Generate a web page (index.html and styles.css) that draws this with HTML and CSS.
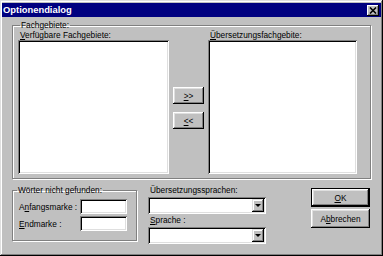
FILE: index.html
```html
<!DOCTYPE html>
<html lang="de">
<head>
  <meta charset="UTF-8">
  <title>Optionendialog</title>
  <link rel="stylesheet" href="styles.css">
</head>
<body>

  <div class="window">
    <div class="titlebar">
      <span class="title">Optionendialog</span>
      <span class="close">
        <svg width="8" height="7" viewBox="0 0 8 7"><path d="M1 0.5L7 6.5M7 0.5L1 6.5" stroke="#000" stroke-width="1.6"/></svg>
      </span>
    </div>

    <div class="content">
      <!-- Fachgebiete -->
      <fieldset class="group topics">
        <legend>Fachgebiete:</legend>
        <div class="topic-col">
          <div class="label"><u>V</u>erfügbare Fachgebiete:</div>
          <div class="listbox left"></div>
        </div>
        <div class="move-col">
          <button class="btn move"><u>&gt;</u>&gt;</button>
          <button class="btn move"><u>&lt;</u>&lt;</button>
        </div>
        <div class="topic-col">
          <div class="label"><u>Ü</u>bersetzungsfachgebite:</div>
          <div class="listbox right"></div>
        </div>
      </fieldset>

      <div class="bottom">
        <!-- Woerter nicht gefunden -->
        <fieldset class="group missing">
          <legend>Wörter nicht gefunden:</legend>
          <div class="field-row">
            <span class="field-label">A<u>n</u>fangsmarke :</span>
            <div class="input"></div>
          </div>
          <div class="field-row">
            <span class="field-label"><u>E</u>ndmarke :</span>
            <div class="input"></div>
          </div>
        </fieldset>

        <div class="lang-col">
          <div class="label">Übersetzungssprachen:</div>
          <div class="combo"><span class="drop"><span class="arrow"></span></span></div>
          <div class="label second"><u>S</u>prache :</div>
          <div class="combo"><span class="drop"><span class="arrow"></span></span></div>
        </div>

        <div class="actions">
          <button class="btn default"><span><u>O</u>K</span></button>
          <button class="btn">A<u>b</u>brechen</button>
        </div>
      </div>
    </div>
  </div>

</body>
</html>
```

FILE: styles.css
```css
body {
  margin: 0;
  font-family: "Liberation Sans", Arial, sans-serif;
  font-size: 8.3px;
  line-height: 10px;
  color: #000;
  background: #c0c0c0;
}

.window {
  width: 383px;
  height: 256px;
  box-sizing: border-box;
  padding: 3px 2px 2px 2px;
  background: #c0c0c0;
  box-shadow: inset -1px -1px #000, inset 1px 1px #dfdfdf,
              inset -2px -2px #808080, inset 2px 2px #fff;
}

/* title bar */
.titlebar {
  height: 14px;
  background: #000080;
  display: flex;
  align-items: center;
  justify-content: space-between;
  padding: 0 2px 0 1px;
}

.title {
  color: #fff;
  font-weight: bold;
  font-size: 9.4px;
}

.close {
  width: 12px;
  height: 11px;
  box-sizing: border-box;
  background: #c0c0c0;
  display: flex;
  align-items: center;
  justify-content: center;
  box-shadow: inset -1px -1px #000, inset 1px 1px #fff, inset -2px -2px #808080;
}

.content {
  padding-top: 3px;
}

/* group boxes */
.group {
  margin: 0 0 0 10px;
  box-sizing: border-box;
  border: 1px solid #808080;
  box-shadow: inset 1px 1px #fff, 1px 1px #fff;
  min-width: 0;
}

.group legend {
  padding: 0 1px;
}

.topics {
  width: 359px;
  height: 159px;
  padding: 0 13px 4px 5px;
  display: grid;
  grid-template-columns: 151px 31px 149px;
  column-gap: 4px;
  align-items: start;
}

.topics legend {
  margin-left: 2px;
}

.listbox {
  height: 134px;
  background: #fff;
  box-shadow: inset 1px 1px #808080, inset -1px -1px #fff,
              inset 2px 2px #000, inset -2px -2px #dfdfdf;
}

.topic-col .label {
  padding-left: 2px;
}

.move-col {
  display: flex;
  flex-direction: column;
  gap: 8px;
  padding-top: 57px;
}

/* buttons */
.btn {
  font: inherit;
  color: #000;
  background: #c0c0c0;
  border: none;
  padding: 0;
  box-shadow: inset -1px -1px #000, inset 1px 1px #fff,
              inset -2px -2px #808080, inset 2px 2px #dfdfdf;
}

.move {
  height: 17px;
}

.bottom {
  display: flex;
  align-items: flex-start;
  margin-top: 6px;
}

.missing {
  width: 125px;
  height: 56px;
  padding: 4px 9px 9px 6px;
  display: flex;
  flex-direction: column;
  gap: 2px;
}

.missing legend {
  margin-left: -2px;
}

.field-row {
  display: flex;
  align-items: center;
}

.field-label {
  width: 61px;
}

.input {
  width: 47px;
  height: 15px;
  background: #fff;
  box-shadow: inset 1px 1px #808080, inset -1px -1px #fff,
              inset 2px 2px #000, inset -2px -2px #dfdfdf;
}

/* language column */
.lang-col {
  width: 118px;
  margin-left: 11px;
}

.lang-col .label {
  padding-left: 2px;
}

.lang-col .second {
  margin-top: 1px;
}

.combo {
  height: 17px;
  margin-top: 2px;
  box-sizing: border-box;
  padding: 2px;
  display: flex;
  justify-content: flex-end;
  background: #fff;
  box-shadow: inset 1px 1px #808080, inset -1px -1px #fff,
              inset 2px 2px #000, inset -2px -2px #dfdfdf;
}

.drop {
  width: 12px;
  height: 13px;
  background: #c0c0c0;
  display: flex;
  align-items: center;
  justify-content: center;
  box-shadow: inset -1px -1px #000, inset 1px 1px #dfdfdf,
              inset -2px -2px #808080, inset 2px 2px #fff;
}

.arrow {
  width: 0;
  height: 0;
  border-left: 3px solid transparent;
  border-right: 3px solid transparent;
  border-top: 3px solid #000;
}

/* OK / Abbrechen */
.actions {
  width: 59px;
  margin: 3px 11px 0 auto;
  display: flex;
  flex-direction: column;
  gap: 2px;
}

.actions .btn {
  height: 19px;
}

.actions .default {
  box-shadow: inset 0 0 0 1px #000, inset -2px -2px #000, inset 2px 2px #fff,
              inset -3px -3px #808080, inset 3px 3px #dfdfdf;
}
```
